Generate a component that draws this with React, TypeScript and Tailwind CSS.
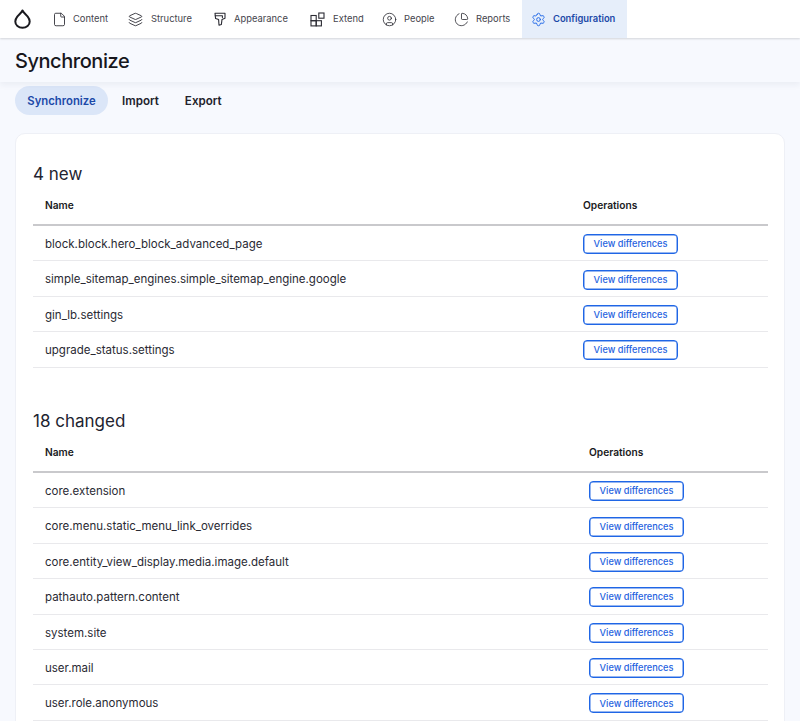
import { File, Layers, CircleUser, ChartPie, Settings } from "lucide-react";

function Drop() {
  return (
    <svg width="17" height="20" viewBox="0 0 17 20" fill="none">
      <path d="M8.5 1.5 C7.5 3.8 5 5.4 3.3 7.6 C1.9 9.4 1.3 10.8 1.3 12.4 C1.3 16.2 4.5 18.8 8.5 18.8 C12.5 18.8 15.7 16.2 15.7 12.4 C15.7 10.8 15.1 9.4 13.7 7.6 C12 5.4 9.5 3.8 8.5 1.5 Z" stroke="#1a1a1f" strokeWidth="2" strokeLinejoin="round" />
    </svg>
  );
}

function Brush() {
  return (
    <svg width="14" height="14" viewBox="0 0 14 14" fill="none" stroke="#2b2b33" strokeWidth="1.1" strokeLinejoin="round" strokeLinecap="round">
      <path d="M2 1.2H12V6.2L9 7.4 8.4 12.4 6 13.2 5.6 7.6 2.6 6.6Z" />
      <path d="M2.2 3.8H9.4V5.6" />
    </svg>
  );
}

function Extend() {
  return (
    <svg width="15" height="15" viewBox="0 0 15 15" fill="none" stroke="#2b2b33" strokeWidth="1.1">
      <rect x="1" y="3.5" width="5.2" height="5.2" />
      <rect x="1" y="8.7" width="5.2" height="5.2" />
      <rect x="6.2" y="8.7" width="5.2" height="5.2" />
      <rect x="8.8" y="1" width="5.2" height="5.2" />
    </svg>
  );
}

const navItems = [
  { label: "Content", icon: <File size={15} strokeWidth={1.4} color="#2b2b33" />, cls: "w-[79px] pl-[3px]", gap: "gap-[6px]" },
  { label: "Structure", icon: <Layers size={15} strokeWidth={1.4} color="#2b2b33" />, cls: "w-[85px]", gap: "gap-[8px]" },
  { label: "Appearance", icon: <Brush />, cls: "w-[97px]", gap: "gap-[7px]" },
  { label: "Extend", icon: <Extend />, cls: "w-[72px]", gap: "gap-[8px]" },
  { label: "People", icon: <CircleUser size={15} strokeWidth={1.3} color="#2b2b33" />, cls: "w-[72px]", gap: "gap-[7px]" },
  { label: "Reports", icon: <ChartPie size={15} strokeWidth={1.3} color="#2b2b33" />, cls: "w-[68px]", gap: "gap-[7px]" },
];

const newRows = [
  "block.block.hero_block_advanced_page",
  "simple_sitemap_engines.simple_sitemap_engine.google",
  "gin_lb.settings",
  "upgrade_status.settings",
];
const changedRows = [
  "core.extension",
  "core.menu.static_menu_link_overrides",
  "core.entity_view_display.media.image.default",
  "pathauto.pattern.content",
  "system.site",
  "user.mail",
  "user.role.anonymous",
];

function Section({ title, rows, col }: { title: string; rows: string[]; col: string }) {
  return (
    <section>
      <h2 className="text-[17px] leading-[26px] text-[#222330] font-normal">{title}</h2>
      <div className="flex items-center h-[39px] pt-[1px] border-b-2 border-[#c9c9cc] text-[10.2px] font-semibold text-[#1a1a22]">
        <div className={col}>Name</div>
        <div>Operations</div>
      </div>
      {rows.map((r) => (
        <div key={r} className="flex items-center h-[35.4px] pt-[2px] border-b border-[#e9e9ec] text-[11.5px] text-[#2a2a33]">
          <div className={`${col} pt-[1px]`}>{r}</div>
          <button className="w-[95px] h-[20px] rounded-[4px] border border-[#1f66e6] shadow-[inset_0_0_0_0.5px_#2f6fe4] text-[9.2px] font-medium text-[#1f62e0] bg-white flex items-center justify-center">
            View differences
          </button>
        </div>
      ))}
    </section>
  );
}

export default function App() {
  return (
    <div className="w-[800px] h-[721px] overflow-hidden bg-[#f7f9fe] [font-family:Inter,sans-serif]">
      <nav className="h-[38px] bg-white flex items-stretch shadow-[0_1px_2px_rgba(0,0,0,0.15)] relative z-20">
        <div className="w-[49px] pl-[14px] flex items-center"><Drop /></div>
        {navItems.map((n) => (
          <div key={n.label} className={`flex items-center text-[9.4px] text-[#45454d] ${n.cls} ${n.gap}`}>
            {n.icon}
            <span>{n.label}</span>
          </div>
        ))}
        <div className="w-[105px] bg-[#e6eefa] flex items-center gap-[7px] pl-[9px] text-[9.4px] font-semibold text-[#1c49a8]">
          <Settings size={15} strokeWidth={1.5} color="#1f66e6" />
          <span>Configuration</span>
        </div>
      </nav>
      <header className="h-[44px] flex items-center pl-[15px] pt-[2px] shadow-[0_3px_6px_rgba(40,50,90,0.06)] relative z-10">
        <h1 className="text-[20px] font-medium text-[#17171d] tracking-[-0.45px]">Synchronize</h1>
      </header>
      <div className="flex items-center pl-[15px] mt-[4px] h-[29px] text-[11.3px] font-semibold text-[#22222c]">
        <div className="h-[29px] w-[93px] rounded-full bg-[#dbe6f8] text-[#1c49a8] flex items-center justify-center pt-[1px]">Synchronize</div>
        <div className="ml-[14px] pt-[2px] text-[11.6px]">Import</div>
        <div className="ml-[26px] pt-[2px] text-[11.6px]">Export</div>
      </div>
      <main className="mx-[15px] mt-[18px] bg-white rounded-t-[10px] border border-[#eef0f6] pt-[27px] pl-[17px] pr-[16px] h-[700px]">
        <Section title="4 new" rows={newRows} col="w-[550px] pl-[12px]" />
        <div className="h-[40.4px]" />
        <Section title="18 changed" rows={changedRows} col="w-[556px] pl-[12px]" />
      </main>
    </div>
  );
}
